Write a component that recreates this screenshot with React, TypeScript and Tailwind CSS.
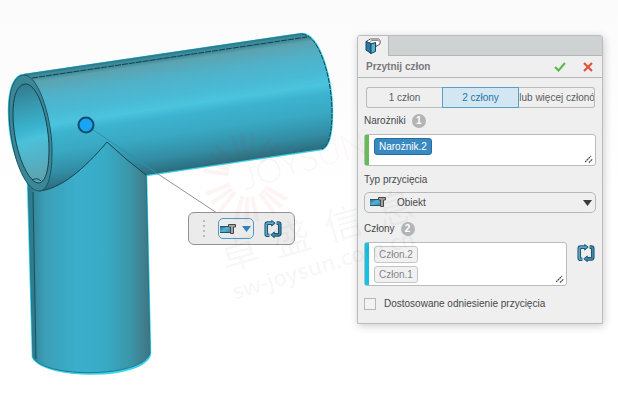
import { useState } from "react";
import clsx from "clsx";

function FlipIcon({ className }: { className?: string }) {
  return (
    <svg viewBox="0 0 20 20" className={className} aria-hidden="true">
      <g fill="none" stroke="#1f5572" strokeWidth="4" strokeLinejoin="round">
        <path d="M6 17H4Q2.500 17 2.500 15.500V5Q2.500 3.500 4 3.500H9" />
        <path d="M14 3.500H16Q17.500 3.500 17.500 5V15Q17.500 16.500 16 16.500H11" />
      </g>
      <path d="M8.500 .5L12.500 3.500 8.500 6.800zM11.500 13.200L7.500 16.500 11.500 19.700z" fill="#3a8bb0" stroke="#1f5572" />
      <g fill="none" stroke="#5aaacb" strokeWidth="1.800">
        <path d="M5.500 17H4Q2.500 17 2.500 15.500V5Q2.500 3.500 4 3.500H10" />
        <path d="M14.500 3.500H16Q17.500 3.500 17.500 5V15Q17.500 16.500 16 16.500H10" stroke="#3f87a8" />
      </g>
    </svg>
  );
}

function TrimIcon({ className }: { className?: string }) {
  return (
    <svg viewBox="0 0 16 10" className={className} aria-hidden="true">
      <defs>
        <linearGradient id="trim" x1="0" y1="0" x2="1" y2="1">
          <stop offset="0" stopColor="#1f5e7e" />
          <stop offset=".5" stopColor="#59b3d3" />
          <stop offset="1" stopColor="#2d86ab" />
        </linearGradient>
      </defs>
      <rect y="2" width="10" height="7" fill="url(#trim)" />
      <path d="M0 2.500H9M0 8.500H10" stroke="#24556d" />
      <path d="M8.500 .5H15.500V3H13.500V9.500H10.500V3H8.500z" fill="#a5a5a5" stroke="#4a4a4a" />
    </svg>
  );
}

function CornerIcon() {
  return (
    <svg viewBox="0 0 16 16" className="h-4 w-4" aria-hidden="true">
      <path d="M1 3.500L5.500 1H13.500L15.200 2.500 15 6 11 8.500 10.500 5 6 5.500z" fill="#fff" stroke="#5c5c5c" strokeLinejoin="round" />
      <path d="M5 3.500L7 2.500H13L14.500 3.500" fill="none" stroke="#8c8c8c" />
      <path d="M1 3.500L6 5.500V15.500L1 12z" fill="#2979a3" stroke="#174864" strokeLinejoin="round" />
      <path d="M6 6L10.500 4.500V13.500L6 15.500z" fill="#5eaed0" stroke="#174864" strokeLinejoin="round" />
    </svg>
  );
}

function Grip() {
  return (
    <svg viewBox="0 0 8 8" className="absolute right-0.5 bottom-0.5 h-2 w-2" aria-hidden="true">
      <path d="M0 7L6 1M4 7.500L7.500 4" stroke="#444" strokeWidth="1.200" strokeDasharray="2 .5" />
    </svg>
  );
}

function Pipes() {
  return (
    <svg viewBox="0 0 350 401" className="absolute top-0 left-0 h-[401px] w-[350px]" role="img" aria-label="Model">
      <defs>
        <linearGradient id="tube" gradientUnits="userSpaceOnUse" x1="160" y1="54" x2="177" y2="170">
          <stop offset="0" stopColor="#35899b" />
          <stop offset=".05" stopColor="#438d9b" />
          <stop offset=".08" stopColor="#5ba3b0" />
          <stop offset=".2" stopColor="#50b1c7" />
          <stop offset=".36" stopColor="#49bad6" />
          <stop offset=".46" stopColor="#4bc4de" />
          <stop offset=".54" stopColor="#3db3cf" />
          <stop offset=".7" stopColor="#39a8c3" />
          <stop offset=".88" stopColor="#328ca3" />
          <stop offset="1" stopColor="#2c6d7d" />
        </linearGradient>
        <linearGradient id="post" x1="0" x2="1" y1="0" y2="0">
          <stop offset="0" stopColor="#256f80" />
          <stop offset=".05" stopColor="#34889c" />
          <stop offset=".14" stopColor="#3b9fb7" />
          <stop offset=".4" stopColor="#3aaecb" />
          <stop offset=".62" stopColor="#38abc7" />
          <stop offset=".84" stopColor="#3b95a9" />
          <stop offset="1" stopColor="#41747f" />
        </linearGradient>
        <linearGradient id="bore" x1="0" x2="0.100" y1="0" y2="1">
          <stop offset="0" stopColor="#2f7789" />
          <stop offset=".25" stopColor="#3798ae" />
          <stop offset=".5" stopColor="#3ab4d0" />
          <stop offset=".6" stopColor="#4bc1db" />
          <stop offset="1" stopColor="#5ba5b3" />
        </linearGradient>
      </defs>
      <g fill="none" stroke="#35d3ec" strokeWidth="2.500">
        <path d="M24 75L302 34C320 35 332 80 332 112C332 135 328 147 322 149L146 175L150 354C144 380 43 379 33 357L28 180C17 164 9 141 9 110C9 88 15 75 24 75z" />
      </g>
      <path d="M28 175L33 357C43 379 144 378 150 353L146 170L107 140z" fill="url(#post)" stroke="#23788d" />
      <path d="M28 180L33 357L36 360L33 190z" fill="#2f7c8e" />
      <path d="M33 192L36 359" stroke="#1d4f5d" />
      <path d="M24 75L302 34C320 35 332 80 332 112C332 135 328 147 322 149L146 175L107 142C84 169 61 189 39 191z" fill="url(#tube)" />
      <path d="M302 34C320 35 332 80 332 112C332 135 328 147 322 149" fill="none" stroke="#17414c" strokeDasharray="5 1" />
      <path d="M24 75L302 34" stroke="#2c7f91" strokeWidth="2" />
      <path d="M32 78L307 37" stroke="#153f4b" strokeDasharray="6 1" />
      <path d="M107 142Q125 159 146 175M107 142C84 169 61 189 39 191" fill="none" stroke="#174350" />
      <path d="M24 75C40 75 53 125 52 153C52 178 47 191 39 191C24 191 9 150 9 110C9 88 15 75 24 75z" fill="#3b8798" stroke="#1d5361" />
      <path d="M26 84C39 85 49 122 49 149C49 172 45 183 38 183C26 181 13 146 13 114C13 94 18 84 26 84z" fill="url(#bore)" stroke="#17414c" />
      <path d="M32 180Q37 177 41 181" fill="none" stroke="#173f4b" />
      <path d="M86 125L158 174" stroke="#2894ad" />
      <path d="M158 174L217 213" stroke="#929292" />
      <circle cx="86" cy="125" r="7.500" fill="#18a5f4" stroke="#104e6c" strokeWidth="2" />
    </svg>
  );
}

const rays = [-172, -160, -148, -136, -112, -98, -84, -60, -48, 30, 42, 54, 78, 92, 106, 130, 144, 158];

function Watermark() {
  return (
    <svg viewBox="0 0 618 401" className="pointer-events-none absolute top-0 left-0 h-[401px] w-[618px]" aria-hidden="true">
      <g stroke="#e03030" strokeOpacity=".05" strokeWidth="4">
        {rays.map((angle) => (
          <path key={angle} d="M20 0H45" transform={`translate(248 177) rotate(${angle})`} />
        ))}
      </g>
      <g transform="translate(246 190) rotate(-17)" fill="#000" fillOpacity=".055">
        <text className="font-['Lato',sans-serif] text-[34px] font-light">
          JOYS<tspan fill="#e03030">UN</tspan>
        </text>
      </g>
      <g transform="translate(225 272) rotate(-16)" fill="#000" fillOpacity=".045">
        <text className="font-['Noto_Sans_CJK_SC',sans-serif] text-[38px] tracking-[16px]">卓盛信息</text>
      </g>
      <g transform="translate(235 300) rotate(-17)" fill="#000" fillOpacity=".045">
        <text className="font-['Noto_Sans',sans-serif] text-[22px] font-semibold">sw-joysun.com.cn</text>
      </g>
    </svg>
  );
}

function Toolbar() {
  return (
    <div className="absolute top-[212px] left-[188px] flex h-[33px] w-[107px] items-center rounded-md border border-[#929292] bg-[#ebebeb] pl-3.5">
      <div className="flex w-1 flex-col gap-[3px]">
        <i className="size-[2px] bg-[#bbb]" />
        <i className="size-[2px] bg-[#bbb]" />
        <i className="size-[2px] bg-[#bbb]" />
        <i className="size-[2px] bg-[#bbb]" />
      </div>
      <button aria-label="Typ przycięcia" className="ml-[11px] flex h-[21px] w-9 items-center gap-1.5 rounded-[5px] border border-[#4d9bc8]">
        <TrimIcon className="ml-px h-2.5 w-4" />
        <svg viewBox="0 0 9 6" className="h-1.5 w-[9px]">
          <path d="M0 0H9L4.500 6z" fill="#3181b8" />
        </svg>
      </button>
      <button aria-label="Odwróć" className="ml-2.5">
        <FlipIcon className="size-[18px]" />
      </button>
    </div>
  );
}

function SectionLabel({ text, count }: { text: string; count: number }) {
  return (
    <div className="flex h-4 items-center gap-1.5">
      <span>{text}</span>
      <span className="flex h-3.5 w-3.5 items-center justify-center rounded-full bg-[#b2b4b6] font-bold text-white">{count}</span>
    </div>
  );
}

const modes = ["1 człon", "2 człony", "3 lub więcej członów"];

function TrimPanel() {
  const [mode, setMode] = useState(1);
  return (
    <section className="mt-[35px] mr-[15px] w-[246px] shrink-0 self-start rounded-t-[3px] border border-[#b9bcbd] bg-[#efefef] shadow-[1px_2px_8px_rgba(0,0,0,0.2)]">
      <div className="flex h-5 rounded-t-[2px] bg-[#ced2d3]">
        <div className="flex w-[31px] justify-center rounded-tl-[2px] border-r border-[#b4b8b9] bg-[#efefef] pt-0.5">
          <CornerIcon />
        </div>
        <div className="flex-1 border-b border-[#b4b8b9]" />
      </div>
      <header className="flex h-[22px] items-center border-b border-[#b4b6b7] px-2">
        <h1 className="flex-1 font-bold text-[#77797c]">Przytnij człon</h1>
        <button aria-label="OK" className="mr-4">
          <svg viewBox="0 0 12 12" className="size-3">
            <path d="M1 6L4.500 9.500 11 2" fill="none" stroke="#57b947" strokeWidth="2" />
          </svg>
        </button>
        <button aria-label="Anuluj">
          <svg viewBox="0 0 12 12" className="size-3">
            <path d="M2 2L10 10M10 2L2 10" stroke="#e0523a" strokeWidth="2.200" />
          </svg>
        </button>
      </header>
      <div className="px-1.5 pt-[9px] pb-[11px]">
        <div className="mr-px ml-0.5 flex h-[21px]">
          {modes.map((name, i) => (
            <button
              key={name}
              onClick={() => setMode(i)}
              className={clsx(
                "flex min-w-0 flex-1 items-center justify-center overflow-hidden whitespace-nowrap border first:rounded-l-[3px] last:rounded-r-[3px]",
                i === mode ? "border-[#5a9fc9] bg-[#d3e7f2] text-[#2475a8]" : "border-[#b9bbbc] text-[#5b5d5f]",
                i === 0 && "border-r-0",
                i === 2 && "border-l-0"
              )}
            >
              <span>{name}</span>
            </button>
          ))}
        </div>
        <div className="mt-[5px]">
          <SectionLabel text="Narożniki" count={1} />
        </div>
        <div className="relative mt-[5px] flex h-8 rounded-[3px] border border-[#b9bbbc] bg-white">
          <div className="w-1 bg-[#66ba5a]" />
          <button className="mt-[3px] ml-[5px] h-[17px] rounded-[3px] border border-[#246b9e] bg-[#3a8ac2] px-1 text-white">Narożnik.2</button>
          <Grip />
        </div>
        <label htmlFor="trim-type" className="mt-1.5 block h-4">
          Typ przycięcia
        </label>
        <div className="relative mt-1">
          <select id="trim-type" className="block h-[21px] w-full appearance-none rounded-[5px] border border-[#b5b7b8] bg-[#efefef] pl-8">
            <option>Obiekt</option>
          </select>
          <TrimIcon className="pointer-events-none absolute top-[5px] left-1.5 h-2.5 w-4" />
          <svg viewBox="0 0 9 6" className="pointer-events-none absolute top-2 right-1 h-1.5 w-[9px]">
            <path d="M0 0H9L4.500 6z" fill="#3b3b3b" />
          </svg>
        </div>
        <div className="mt-2">
          <SectionLabel text="Człony" count={2} />
        </div>
        <div className="mt-[5px] flex items-start">
          <div className="relative flex h-11 flex-1 rounded-[3px] border border-[#b9bbbc] bg-white">
            <div className="w-1 bg-[#12c3e8]" />
            <div className="mt-[3px] ml-[5px] flex flex-col gap-[3px] text-[#85878a]">
              <button className="h-[17px] rounded-[3px] border border-[#c3c5c6] bg-[#f1f1f1] px-1">Człon.2</button>
              <button className="h-[17px] rounded-[3px] border border-[#c3c5c6] bg-[#f1f1f1] px-1">Człon.1</button>
            </div>
            <Grip />
          </div>
          <button aria-label="Odwróć" className="mt-0.5 mr-px ml-2.5">
            <FlipIcon className="size-[18px]" />
          </button>
        </div>
        <label className="mt-2.5 flex h-4 items-center gap-2">
          <input type="checkbox" className="size-3 appearance-none border border-[#b5b7bb] bg-[#f2f2f2] checked:bg-[#3a8ac2]" />
          Dostosowane odniesienie przycięcia
        </label>
      </div>
    </section>
  );
}

export default function App() {
  return (
    <main className="relative flex min-h-screen justify-end overflow-hidden bg-linear-to-b from-[#fbfbfb] to-white to-50% font-['Liberation_Sans',Arial,sans-serif] text-[10px] leading-4 text-[#47494b]">
      <Pipes />
      <Toolbar />
      <TrimPanel />
      <Watermark />
    </main>
  );
}
